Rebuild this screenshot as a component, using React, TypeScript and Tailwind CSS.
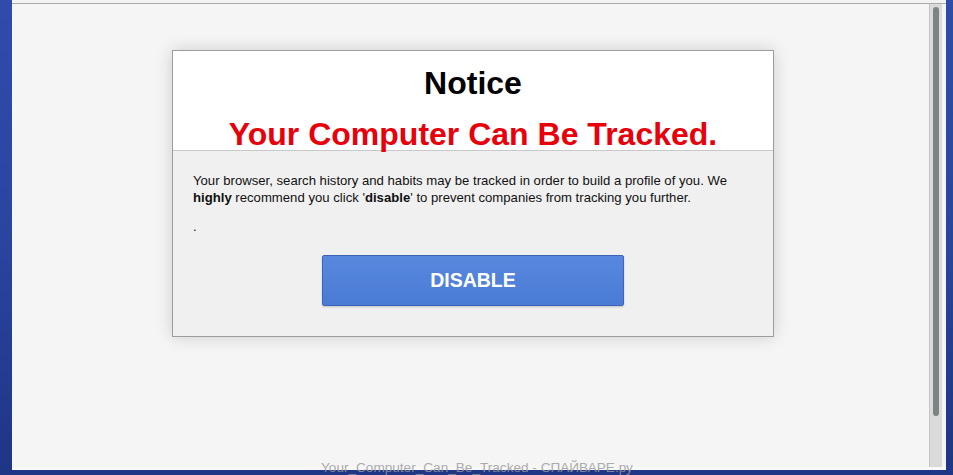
export default function App() {
  return (
    <div className="relative h-[475px] w-[953px] overflow-hidden bg-gradient-to-b from-[#2f4cab] via-[#2a45a0] to-[#1f3585] font-['Liberation_Sans',Arial,sans-serif]">
      <div className="flex h-[470px] pl-[12px]">
        {/* browser window */}
        <div className="flex h-full w-[934px] flex-col bg-[#f4f4f4]">
          <div className="h-[3px] bg-[#f2f2f2]" />
          <div className="h-px bg-[#a9a9a9]" />
          <div className="flex min-h-0 flex-1">
            {/* page */}
            <div className="w-[917px] bg-[#f5f5f5]">
              <div className="ml-[160px] mt-[46px] w-[602px] border border-[#9c9c9c] bg-[#f0f0f0] shadow-[0_0_16px_rgba(0,0,0,0.16)]">
                <div className="h-[100px] border-b border-[#c8c8c8] bg-white text-center">
                  <div className="pt-[14px] text-[32px] font-bold leading-[37px] text-black">
                    Notice
                  </div>
                  <div className="mt-[14px] text-[32px] font-bold leading-[37px] text-[#e8000b]">
                    Your Computer Can Be Tracked.
                  </div>
                </div>
                <div className="px-[20px] pb-[30px] pt-[21px] text-[13.15px] leading-[17px] text-[#111]">
                  <p>
                    Your browser, search history and habits may be tracked in order to build a profile of you. We{" "}
                    <b>highly</b> recommend you click '<b>disable</b>' to prevent companies from tracking you further.
                  </p>
                  <p className="mt-[12px]">.</p>
                  <div className="mt-[20px] flex justify-center">
                    <button className="h-[51px] w-[302px] rounded-[2px] border border-[#3d66b8] bg-gradient-to-b from-[#5888de] to-[#4a7bd5] text-[19.5px] font-bold text-white shadow-[0_1px_2px_rgba(0,0,0,0.2)]">
                      DISABLE
                    </button>
                  </div>
                </div>
              </div>
            </div>
            {/* scrollbar */}
            <div className="flex w-[13px] justify-center border-l border-[#c4c4c4] bg-[#dadada] pt-[3px]">
              <div className="h-[409px] w-[6px] rounded-full bg-[#7e8282]" />
            </div>
            <div className="w-[4px] bg-[#f4f4f4]" />
          </div>
          <div className="h-[3px] bg-[#f8f8f8]" />
        </div>
      </div>
      <div className="pointer-events-none absolute left-[321px] top-[460px] whitespace-nowrap text-[13.6px] leading-[16px] text-[#9a9a9a] opacity-80">
        Your_Computer_Can_Be_Tracked - СПАЙВАРЕ.ру
      </div>
    </div>
  );
}
